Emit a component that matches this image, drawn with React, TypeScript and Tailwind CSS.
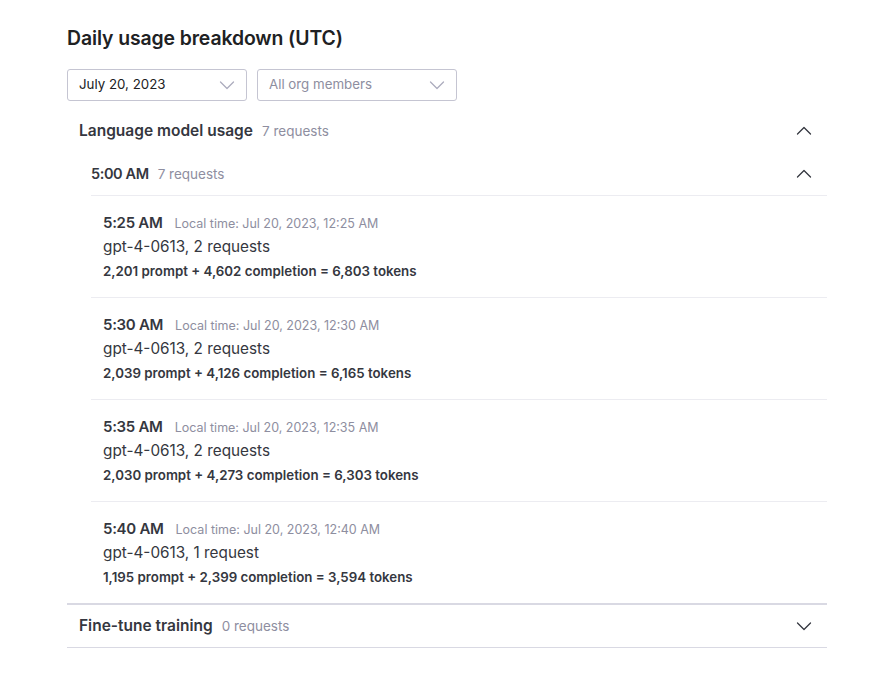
import React from "react";

const Chevron = ({ up, className }: { up?: boolean; className?: string }) => (
  <svg width="16" height="16" viewBox="0 0 16 16" fill="none" className={className}>
    <path
      d={up ? "M1.5 11 L8 4.5 L14.5 11" : "M1.5 5 L8 11.5 L14.5 5"}
      stroke="currentColor"
      strokeWidth="1.3"
      strokeLinecap="round"
      strokeLinejoin="round"
    />
  </svg>
);

const items = [
  { t: "5:25 AM", local: "Jul 20, 2023, 12:25 AM", req: "gpt-4-0613, 2 requests", tok: "2,201 prompt + 4,602 completion = 6,803 tokens" },
  { t: "5:30 AM", local: "Jul 20, 2023, 12:30 AM", req: "gpt-4-0613, 2 requests", tok: "2,039 prompt + 4,126 completion = 6,165 tokens" },
  { t: "5:35 AM", local: "Jul 20, 2023, 12:35 AM", req: "gpt-4-0613, 2 requests", tok: "2,030 prompt + 4,273 completion = 6,303 tokens" },
  { t: "5:40 AM", local: "Jul 20, 2023, 12:40 AM", req: "gpt-4-0613, 1 request", tok: "1,195 prompt + 2,399 completion = 3,594 tokens" },
];

export default function App() {
  return (
    <div className="min-h-[673px] w-[880px] bg-white text-[#202123]" style={{ fontFamily: "Inter, 'Noto Sans', sans-serif" }}>
      <div className="ml-[67px] w-[760px] pt-6">
        <h1 className="text-[19.4px] font-semibold leading-[28px] tracking-[-0.1px]">Daily usage breakdown (UTC)</h1>
        <div className="mt-[17px] flex gap-[10px]">
          <div className="flex h-[32px] w-[180px] items-center justify-between rounded-[3px] border border-[#c5c5d2] pl-[11px] pr-[11px] text-[13.3px] text-[#202123]">
            <span>July 20, 2023</span>
            <Chevron className="text-[#acacbe]" />
          </div>
          <div className="flex h-[32px] w-[200px] items-center justify-between rounded-[3px] border border-[#c5c5d2] pl-[11px] pr-[11px] text-[13.3px] text-[#8e8ea0]">
            <span>All org members</span>
            <Chevron className="text-[#acacbe]" />
          </div>
        </div>

        <div className="mt-[8px] border-b-2 border-[#d9d9e3]">
          <div className="flex h-[43px] items-center justify-between pl-3 pr-[15px]">
            <div className="flex items-baseline gap-[9px]">
              <span className="text-[15.5px] font-semibold text-[#353740]">Language model usage</span>
              <span className="text-[13.5px] text-[#8e8ea0]">7 requests</span>
            </div>
            <Chevron up className="text-[#353740]" />
          </div>
          <div className="ml-6">
            <div className="flex h-[44px] items-center justify-between border-b border-[#ececf1] pl-0 pr-[15px]">
              <div className="flex items-baseline gap-[9px]">
                <span className="text-[14.5px] font-semibold tracking-[-0.4px] text-[#353740]">5:00 AM</span>
                <span className="text-[13.5px] text-[#8e8ea0]">7 requests</span>
              </div>
              <Chevron up className="text-[#353740]" />
            </div>
            {items.map((it, i) => (
              <div
                key={i}
                className={`px-3 pt-[15px] pb-[14px] ${i < items.length - 1 ? "border-b border-[#ececf1]" : ""}`}
              >
                <div className="flex h-[24px] items-baseline gap-[12px] overflow-hidden leading-[24px]">
                  <span className="text-[15px] font-semibold tracking-[-0.3px] text-[#353740]">{it.t}</span>
                  <span className="text-[12.5px] text-[#8e8ea0]">Local time: {it.local}</span>
                </div>
                <div className="h-[24px] text-[15.3px] leading-[24px] text-[#353740]">{it.req}</div>
                <div className="h-[24px] text-[13.3px] font-semibold leading-[24px] text-[#353740]">{it.tok}</div>
              </div>
            ))}
          </div>
        </div>

        <div className="flex h-[43px] items-center justify-between border-b border-[#d9d9e3] pl-3 pr-[15px]">
          <div className="flex items-center gap-[9px]">
            <span className="text-[15.5px] font-semibold text-[#353740]">Fine-tune training</span>
            <span className="text-[13.5px] text-[#8e8ea0]">0 requests</span>
          </div>
          <Chevron className="text-[#353740]" />
        </div>
      </div>
    </div>
  );
}
